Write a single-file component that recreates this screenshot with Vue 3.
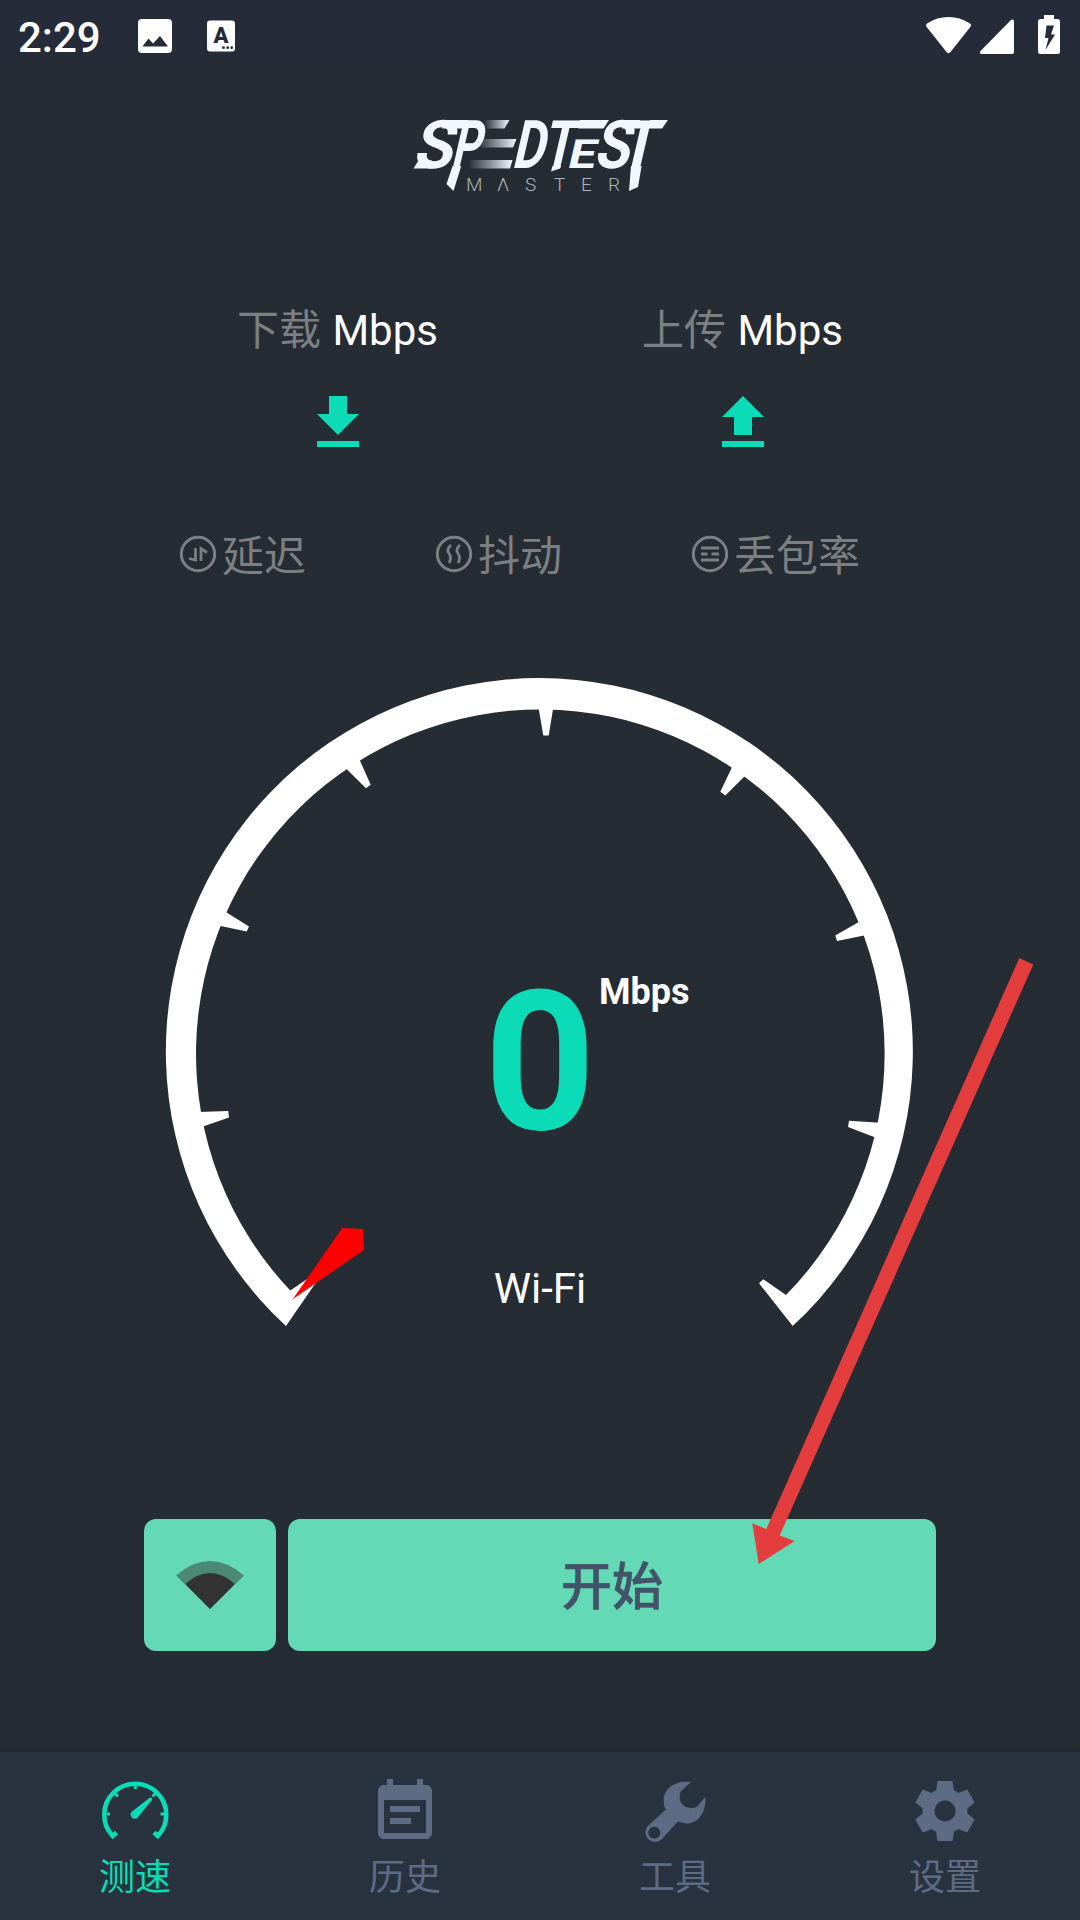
<template>
  <div class="screen">
    <header class="status-bar">
      <span class="clock">2:29</span>
      <svg class="status-left" width="100" height="40" viewBox="137 16 100 40">
        <rect x="138" y="19" width="34" height="34" rx="4" fill="#fff" />
        <path d="M142.500 46.500L148.500 38.500L153 43.500L160 36L168 46.500Z" fill="#262b37" />
        <rect x="207" y="20.500" width="28" height="31" rx="3" fill="#fff" />
        <text x="221" y="43" text-anchor="middle" class="glyph-a">A</text>
        <g fill="#262b37">
          <circle cx="223.500" cy="47.700" r="1.400" />
          <circle cx="227.700" cy="47.700" r="1.400" />
          <circle cx="231.700" cy="47.700" r="1.400" />
        </g>
      </svg>
      <svg class="status-right" width="140" height="44" viewBox="922 13 140 44" fill="#fff">
        <path d="M926.300 26.500Q925.200 24.600 927 23.400C940 14.800 957 14.800 970 23.400Q972 24.600 970.700 26.500L950.500 52Q948.500 54.300 946.500 52Z" />
        <path d="M1010.500 20.500Q1014 18 1014 22V52Q1014 54 1012 54H982Q978.500 54 980.500 51Z" />
        <path fill-rule="evenodd" d="M1044 15H1054V19H1057.500Q1060 19 1060 21.500V51.500Q1060 54 1057.500 54H1040.500Q1038 54 1038 51.500V21.500Q1038 19 1040.500 19H1044ZM1046.500 25.500L1045 38H1048.500L1045.500 50L1055 34.500H1051L1054 25.500Z" />
      </svg>
    </header>

    <div class="brand">
      <svg width="264" height="120" viewBox="408 94 264 120">
        <defs>
          <linearGradient id="trail" x1="0" x2="1">
            <stop offset="0" stop-color="#f2f6ff" stop-opacity="0" />
            <stop offset="1" stop-color="#f2f6ff" />
          </linearGradient>
        </defs>
        <g class="wordmark">
          <text
            v-for="(g, i) in wordmark"
            :key="i"
            :transform="`translate(${g.x} 168) skewX(-13) scale(${g.sx} ${g.sy})`"
          >{{ g.t }}</text>
        </g>
        <g fill="url(#trail)">
          <path d="M484 120H509.500L504.500 128.500H485Z" />
          <path d="M481 139H516.500L513 147.500H477Z" />
          <path d="M470 160H512.500L510 168.500H468Z" />
        </g>
        <g fill="#f2f6ff">
          <path d="M444 120H468L466 128.500H442Z" />
          <path d="M413.500 168.500L418.500 160.500H432V168.500Z" />
          <path d="M452.600 166H461.200L453.500 191L446.500 184Z" />
          <path d="M580 120H609L603.500 128.500H578Z" />
          <path d="M552.500 166H561L560 168.500L551 171.500Z" />
          <path d="M624 120H640V128.500H622Z" />
          <path d="M650 120H668L662 128.500H648Z" />
          <path d="M631 166H641.600L638 187L629 191Z" />
        </g>
        <g class="subword">
          <text v-for="l in subword" :key="l.t" :x="l.x" y="191">{{ l.t }}</text>
        </g>
      </svg>
    </div>

    <section class="speeds">
      <div v-for="s in speeds" :key="s.label" class="speed">
        <div class="speed-title"><span>{{ s.label }}</span> Mbps</div>
        <svg width="72" height="72" viewBox="0 0 24 24" fill="#0bdbb6"><path :d="s.icon" /></svg>
      </div>
    </section>

    <section class="metrics">
      <div v-for="m in metrics" :key="m.label" class="metric">
        <svg width="38" height="38" viewBox="0 0 38 38" fill="none" stroke="#7d8082" stroke-width="3">
          <circle cx="19" cy="19" r="16.700" />
          <path :d="m.icon" stroke-width="2.800" />
        </svg>
        <span>{{ m.label }}</span>
      </div>
    </section>

    <svg class="gauge" width="760" height="660" viewBox="160 672 760 660">
      <path
        d="M286 1325A373.500 373.500 0 1 1 792.700 1325L759 1282.300L763.300 1278.300L786 1294A344.300 344.300 0 1 0 290.300 1289.500L313 1274L317 1280Z"
        fill="#fff"
      />
      <polygon v-for="t in ticks" :key="t" :points="t" fill="#fff" />
      <polygon points="292.700,1298.300 342.300,1226.900 363,1228 364,1249" fill="#f00" />
      <text x="540" y="1128" text-anchor="middle" class="value">0</text>
      <text x="599" y="1002.500" class="unit">Mbps</text>
      <text x="540" y="1302" text-anchor="middle" class="network">Wi-Fi</text>
    </svg>

    <div class="actions">
      <button class="wifi-btn">
        <svg width="68" height="48" viewBox="176 1561 68 48">
          <path d="M210 1609L176 1575.500Q210 1546.500 244 1575.500Z" fill="#4b8974" />
          <path d="M210 1609L185.300 1584Q210 1562 234.700 1584Z" fill="#333" />
        </svg>
      </button>
      <button class="start-btn">开始</button>
    </div>

    <nav class="tabbar">
      <div
        v-for="tab in tabs"
        :key="tab"
        :class="['tab-item', { active: activeTab === tab }]"
        @click="activeTab = tab"
      >
        <svg v-if="tab === '测速'" width="72" height="72" viewBox="99 1776 72 72" fill="none" stroke="currentColor">
          <path d="M116.500 1832.500L112.700 1836A31 31 0 1 1 157.800 1836L154 1832.500" stroke-width="4.600" />
          <path d="M107 1814H110M160.500 1814H164M135.300 1784V1789M114.500 1793L118 1796.500M156 1793L152.500 1796.500" stroke-width="2.800" />
          <path d="M150 1797.500Q152.500 1797.200 152 1800L138.500 1816.500A4.200 4.200 0 1 1 133 1810.800Z" fill="currentColor" stroke="none" />
        </svg>
        <svg v-else-if="tab === '历史'" width="72" height="72" viewBox="0 0 24 24" fill="currentColor">
          <path d="M17 10H7v2h10v-2zm2-7h-1V1h-2v2H8V1H6v2H5c-1.110 0-2 .9-2 2v14c0 1.100.89 2 2 2h14c1.100 0 2-.9 2-2V5c0-1.100-.9-2-2-2zm0 16H5V8h14v11zm-5-5H7v2h7v-2z" />
        </svg>
        <svg v-else-if="tab === '工具'" width="72" height="72" viewBox="57 108 216 216" fill="currentColor">
          <path fill-rule="evenodd" d="M213 126C160 122 131 148 131 182Q131 198 137 209L84 257A28 28 0 1 0 126 297L174 244C215 264 260 235 256 170L234 197A34 34 0 0 1 184 152ZM103 260A18 18 0 1 1 102.900 260Z" />
        </svg>
        <svg v-else width="72" height="72" viewBox="-36 -35 72 72" fill="currentColor">
          <path fill-rule="evenodd" d="M0 -22.500A22.500 22.500 0 1 1 -.1 -22.500ZM0 -10.500A10.500 10.500 0 1 0 .1 -10.500Z" />
          <path v-for="n in 6" :key="n" d="M-7.500 -30H7.500L9.500 -17H-9.500Z" :transform="`rotate(${n * 60})`" />
        </svg>
        <span class="tab-label">{{ tab }}</span>
      </div>
    </nav>

    <svg class="pointer" width="290" height="614" viewBox="748 954 290 614">
      <polygon
        points="1019.300,958 1033.300,964.500 779.700,1535.500 794.700,1541 758.700,1564 752.300,1523.300 766.300,1529"
        fill="#e43d3e"
      />
    </svg>
  </div>
</template>

<script setup>
import { ref } from 'vue';

const activeTab = ref('测速');

const tabs = ['测速', '历史', '工具', '设置'];

const speeds = [
  { label: '下载', icon: 'M19 9h-4V3H9v6H5l7 7 7-7zM5 18v2h14v-2H5z' },
  { label: '上传', icon: 'M9 16h6v-6h4l-7-7-7 7h4zm-4 2h14v2H5z' }
];

const metrics = [
  { label: '延迟', icon: 'M10 23.500L16.500 25V13M28 17.500L22 13.500V26' },
  { label: '抖动', icon: 'M16 10Q11 14.500 14 18.500T14 28M25 10Q20 14.500 23 18.500T23 28' },
  { label: '丢包率', icon: 'M10 13H28M10 19H16.500M20.500 19H28M10 25H28' }
];

const wordmark = [
  { t: 'S', x: 412, sx: 0.96, sy: 1 },
  { t: 'P', x: 450, sx: 0.67, sy: 1 },
  { t: 'D', x: 511, sx: 0.74, sy: 1 },
  { t: 'T', x: 541, sx: 0.75, sy: 1 },
  { t: 'E', x: 566, sx: 0.74, sy: 0.6 },
  { t: 'S', x: 593, sx: 0.86, sy: 1 },
  { t: 'T', x: 617, sx: 0.9, sy: 1 }
];

const subword = [
  { t: 'M', x: 466 },
  { t: 'Λ', x: 497 },
  { t: 'S', x: 525 },
  { t: 'T', x: 554 },
  { t: 'E', x: 581 },
  { t: 'R', x: 608 }
];

const ticks = [
  '198,1111 228.300,1110 229,1116.500 198,1127.200',
  '223,909.200 249,925.600 246.700,930.500 216,923.900',
  '357,753 370.700,783.700 366,787.200 342,763.500',
  '537.700,702 543.300,734.500 548.700,734.500 554,702',
  '735,760 720.300,790.800 725.300,794.400 749,771',
  '864,918 835.300,934.600 837,939.900 869,933.500',
  '884,1121.900 849,1119.800 848,1126 880,1138.300'
];
</script>

<style>
body {
  margin: 0;
  background-color: #252c33;
}
</style>

<style scoped>
.screen {
  position: relative;
  display: flex;
  flex-direction: column;
  width: 1080px;
  height: 1920px;
  overflow: hidden;
  background-color: #252c33;
  color: #fff;
  font-family: Roboto, 'Noto Sans CJK SC', sans-serif;
}

svg {
  display: block;
  flex: none;
  overflow: visible;
}

.status-bar {
  display: flex;
  align-items: flex-start;
  height: 72px;
  background: linear-gradient(#262b39 60%, #252c33);
}

.clock {
  width: 119px;
  padding: 13px 0 0 18px;
  font-size: 42px;
  line-height: 50px;
  font-weight: 500;
}

.status-left {
  margin-top: 16px;
}

.status-right {
  margin: 13px 18px 0 auto;
}

.glyph-a {
  font-size: 22px;
  font-weight: 900;
  fill: #262b37;
}

.brand {
  display: flex;
  justify-content: center;
  padding-top: 22px;
}

.wordmark {
  font-size: 67px;
  font-weight: 700;
  fill: #f2f6ff;
}

.subword {
  font-size: 19px;
  font-weight: 300;
  fill: #aeb4bb;
}

.speeds {
  display: flex;
  margin: 87px 135px 0;
}

.speed {
  flex: 1;
  display: flex;
  flex-direction: column;
  align-items: center;
  gap: 26px;
}

.speed-title {
  font-size: 42px;
  line-height: 60px;
  white-space: pre;
}

.speed-title span {
  margin-right: 1px;
  color: #7d8082;
}

.metrics {
  display: flex;
  margin: 65px 0 0 179px;
}

.metric {
  display: flex;
  align-items: center;
  gap: 5px;
  width: 256px;
  height: 60px;
  color: #7d8082;
  font-size: 42px;
  line-height: 60px;
}

.metric span {
  padding-top: 5px;
}

.gauge {
  margin: 89px 0 0 160px;
}

.value {
  font-size: 194px;
  font-weight: 700;
  fill: #0bdbb6;
}

.unit {
  font-size: 36px;
  font-weight: 700;
  fill: #fff;
}

.network {
  font-size: 42px;
  fill: #fff;
}

.actions {
  display: flex;
  gap: 12px;
  margin: 186px 144px 0;
}

.actions button {
  display: flex;
  align-items: center;
  justify-content: center;
  height: 132px;
  padding: 0;
  border: 0;
  border-radius: 12px;
  background-color: #64d9b5;
  cursor: pointer;
}

.wifi-btn {
  width: 132px;
}

.actions .start-btn {
  flex: 1;
  padding-bottom: 5px;
  color: #43546a;
  font-family: inherit;
  font-size: 51px;
  font-weight: 500;
  -webkit-text-stroke: 0.6px #43546a;
}

.tabbar {
  display: flex;
  height: 168px;
  margin-top: auto;
  background-color: #29333f;
  box-shadow: 0 -1px 4px rgba(30, 30, 30, 0.5);
}

.tab-item {
  flex: 1;
  display: flex;
  flex-direction: column;
  align-items: center;
  padding-top: 24px;
  color: #5d6b85;
  cursor: pointer;
}

.tab-item.active {
  color: #0bdbb6;
}

.tab-label {
  padding-top: 3px;
  font-size: 36px;
  line-height: 54px;
}

.pointer {
  position: absolute;
  left: 748px;
  top: 954px;
}
</style>
